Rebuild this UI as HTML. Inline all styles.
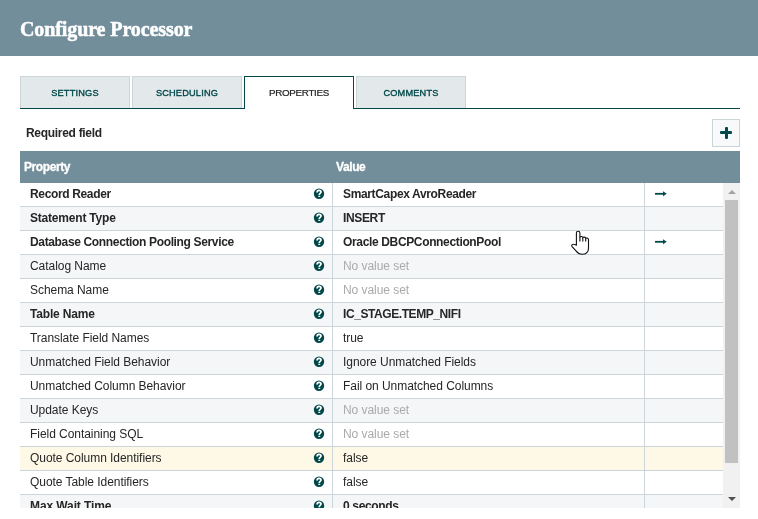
<!DOCTYPE html>
<html><head><meta charset="utf-8">
<style>
*{box-sizing:border-box}
html,body{margin:0;padding:0;width:758px;height:519px;overflow:hidden;background:#fff;font-family:"Liberation Sans",sans-serif;color:#262626}
#hdr{position:absolute;left:0;top:0;width:758px;height:56px;background:#728e9b}
#title{position:absolute;left:20px;top:18px;font:bold 20px/22px "Liberation Serif",serif;color:#fff;letter-spacing:-0.1px;white-space:nowrap;-webkit-text-stroke:0.5px #fff}
.tab{position:absolute;top:76px;height:32px;width:110px;background:#e3e8eb;border:1px solid #c9d7d6;border-bottom:none;color:#004849;font-size:9.2px;text-align:center;line-height:32px;letter-spacing:0.2px;-webkit-text-stroke:0.35px currentColor}
.tab.sel{background:#fff;border:1px solid #004849;border-bottom:none;color:#262626;height:33px;z-index:2;line-height:32px;-webkit-text-stroke:0.22px #262626;font-size:9.8px;letter-spacing:-0.3px}
#tabline{position:absolute;left:20px;top:108px;width:720px;height:1px;background:#004849}
#req{position:absolute;left:26px;top:125px;font-size:12px;font-weight:bold;line-height:16px;letter-spacing:-0.3px;color:#262626}
#add{position:absolute;left:712px;top:119px;width:28px;height:28px;border:1px solid #c9d6d5;background:#f8f9fa}
#add:before{content:"";position:absolute;left:7px;top:11px;width:12px;height:3px;background:#004849;border-radius:1px}
#add:after{content:"";position:absolute;left:11.5px;top:6.5px;width:3px;height:12px;background:#004849;border-radius:1px}
#th{position:absolute;left:20px;top:151px;width:720px;height:32px;background:#728e9b;color:#fff;font-weight:bold;font-size:12px;letter-spacing:-0.4px;-webkit-text-stroke:0.3px #fff}
#th span{position:absolute;top:9px;line-height:14px}
#grid{position:absolute;left:20px;top:183px;width:703px;height:325px;overflow:hidden}
.row{position:absolute;left:0;width:703px;height:24px;border-bottom:1px solid #ccd6da;background:#fff}
.row.odd{background:#f4f6f7}
.row.hov{background:#fef9e7}
.c{position:absolute;top:0;height:23px;line-height:23px;font-size:12px;letter-spacing:-0.05px;white-space:nowrap}
.c1{left:10px}
.c2{left:323px}
.b{font-weight:bold;letter-spacing:-0.35px}
.nv{color:#aaa}
.vline{position:absolute;top:0;width:1px;height:325px;background:#ccd6da}
.q{position:absolute;left:293px;top:5px;width:12px;height:12px}
.arr{position:absolute;left:634px;top:5px;width:14px;height:12px}
#sb{position:absolute;left:723px;top:183px;width:17px;height:325px;background:#f1f1f1}
#thumb{position:absolute;left:2px;top:17px;width:13px;height:263px;background:#c1c1c1}
#up{position:absolute;left:5px;top:7px;border-bottom:4px solid #a3a3a3;border-left:4px solid transparent;border-right:4px solid transparent}
#dn{position:absolute;left:5px;top:314px;border-top:4px solid #505050;border-left:4px solid transparent;border-right:4px solid transparent}
body{will-change:transform}
</style></head><body>
<div id="hdr"><div id="title">Configure Processor</div></div>
<div class="tab" style="left:20px">SETTINGS</div>
<div class="tab" style="left:132px">SCHEDULING</div>
<div class="tab sel" style="left:244px">PROPERTIES</div>
<div class="tab" style="left:356px">COMMENTS</div>
<div id="tabline"></div>
<div id="req">Required field</div>
<div id="add"></div>
<div id="th"><span style="left:4px">Property</span><span style="left:316px">Value</span></div>
<div id="grid">
<div class="row" style="top:0"><span class="c c1 b">Record Reader</span><svg class="q" viewBox="0 0 12 12"><circle cx="6" cy="5.7" r="5.2" fill="#004849"/><path d="M4.1 4.4C4.1 3.1 5 2.4 6.05 2.4C7.1 2.4 8 3 8 4.1C8 5.3 6.3 5.4 6.3 6.5V6.9" fill="none" stroke="#fff" stroke-width="1.7"/><rect x="5.4" y="7.7" width="1.8" height="1.3" fill="#fff"/></svg><span class="c c2 b">SmartCapex AvroReader</span><svg class="arr" viewBox="0 0 14 12"><rect x="1" y="4.9" width="9" height="1.8" fill="#004849"/><path d="M9 3.3L12.7 5.8L9 8.3Z" fill="#004849"/></svg></div>
<div class="row odd" style="top:24px"><span class="c c1 b" style="letter-spacing:-0.2px">Statement Type</span><svg class="q" viewBox="0 0 12 12"><circle cx="6" cy="5.7" r="5.2" fill="#004849"/><path d="M4.1 4.4C4.1 3.1 5 2.4 6.05 2.4C7.1 2.4 8 3 8 4.1C8 5.3 6.3 5.4 6.3 6.5V6.9" fill="none" stroke="#fff" stroke-width="1.7"/><rect x="5.4" y="7.7" width="1.8" height="1.3" fill="#fff"/></svg><span class="c c2 b">INSERT</span></div>
<div class="row" style="top:48px"><span class="c c1 b">Database Connection Pooling Service</span><svg class="q" viewBox="0 0 12 12"><circle cx="6" cy="5.7" r="5.2" fill="#004849"/><path d="M4.1 4.4C4.1 3.1 5 2.4 6.05 2.4C7.1 2.4 8 3 8 4.1C8 5.3 6.3 5.4 6.3 6.5V6.9" fill="none" stroke="#fff" stroke-width="1.7"/><rect x="5.4" y="7.7" width="1.8" height="1.3" fill="#fff"/></svg><span class="c c2 b">Oracle DBCPConnectionPool</span><svg class="arr" viewBox="0 0 14 12"><rect x="1" y="4.9" width="9" height="1.8" fill="#004849"/><path d="M9 3.3L12.7 5.8L9 8.3Z" fill="#004849"/></svg></div>
<div class="row odd" style="top:72px"><span class="c c1">Catalog Name</span><svg class="q" viewBox="0 0 12 12"><circle cx="6" cy="5.7" r="5.2" fill="#004849"/><path d="M4.1 4.4C4.1 3.1 5 2.4 6.05 2.4C7.1 2.4 8 3 8 4.1C8 5.3 6.3 5.4 6.3 6.5V6.9" fill="none" stroke="#fff" stroke-width="1.7"/><rect x="5.4" y="7.7" width="1.8" height="1.3" fill="#fff"/></svg><span class="c c2 nv">No value set</span></div>
<div class="row" style="top:96px"><span class="c c1">Schema Name</span><svg class="q" viewBox="0 0 12 12"><circle cx="6" cy="5.7" r="5.2" fill="#004849"/><path d="M4.1 4.4C4.1 3.1 5 2.4 6.05 2.4C7.1 2.4 8 3 8 4.1C8 5.3 6.3 5.4 6.3 6.5V6.9" fill="none" stroke="#fff" stroke-width="1.7"/><rect x="5.4" y="7.7" width="1.8" height="1.3" fill="#fff"/></svg><span class="c c2 nv">No value set</span></div>
<div class="row odd" style="top:120px"><span class="c c1 b" style="letter-spacing:-0.17px">Table Name</span><svg class="q" viewBox="0 0 12 12"><circle cx="6" cy="5.7" r="5.2" fill="#004849"/><path d="M4.1 4.4C4.1 3.1 5 2.4 6.05 2.4C7.1 2.4 8 3 8 4.1C8 5.3 6.3 5.4 6.3 6.5V6.9" fill="none" stroke="#fff" stroke-width="1.7"/><rect x="5.4" y="7.7" width="1.8" height="1.3" fill="#fff"/></svg><span class="c c2 b" style="letter-spacing:-0.42px">IC_STAGE.TEMP_NIFI</span></div>
<div class="row" style="top:144px"><span class="c c1">Translate Field Names</span><svg class="q" viewBox="0 0 12 12"><circle cx="6" cy="5.7" r="5.2" fill="#004849"/><path d="M4.1 4.4C4.1 3.1 5 2.4 6.05 2.4C7.1 2.4 8 3 8 4.1C8 5.3 6.3 5.4 6.3 6.5V6.9" fill="none" stroke="#fff" stroke-width="1.7"/><rect x="5.4" y="7.7" width="1.8" height="1.3" fill="#fff"/></svg><span class="c c2">true</span></div>
<div class="row odd" style="top:168px"><span class="c c1">Unmatched Field Behavior</span><svg class="q" viewBox="0 0 12 12"><circle cx="6" cy="5.7" r="5.2" fill="#004849"/><path d="M4.1 4.4C4.1 3.1 5 2.4 6.05 2.4C7.1 2.4 8 3 8 4.1C8 5.3 6.3 5.4 6.3 6.5V6.9" fill="none" stroke="#fff" stroke-width="1.7"/><rect x="5.4" y="7.7" width="1.8" height="1.3" fill="#fff"/></svg><span class="c c2">Ignore Unmatched Fields</span></div>
<div class="row" style="top:192px"><span class="c c1">Unmatched Column Behavior</span><svg class="q" viewBox="0 0 12 12"><circle cx="6" cy="5.7" r="5.2" fill="#004849"/><path d="M4.1 4.4C4.1 3.1 5 2.4 6.05 2.4C7.1 2.4 8 3 8 4.1C8 5.3 6.3 5.4 6.3 6.5V6.9" fill="none" stroke="#fff" stroke-width="1.7"/><rect x="5.4" y="7.7" width="1.8" height="1.3" fill="#fff"/></svg><span class="c c2">Fail on Unmatched Columns</span></div>
<div class="row odd" style="top:216px"><span class="c c1">Update Keys</span><svg class="q" viewBox="0 0 12 12"><circle cx="6" cy="5.7" r="5.2" fill="#004849"/><path d="M4.1 4.4C4.1 3.1 5 2.4 6.05 2.4C7.1 2.4 8 3 8 4.1C8 5.3 6.3 5.4 6.3 6.5V6.9" fill="none" stroke="#fff" stroke-width="1.7"/><rect x="5.4" y="7.7" width="1.8" height="1.3" fill="#fff"/></svg><span class="c c2 nv">No value set</span></div>
<div class="row" style="top:240px"><span class="c c1">Field Containing SQL</span><svg class="q" viewBox="0 0 12 12"><circle cx="6" cy="5.7" r="5.2" fill="#004849"/><path d="M4.1 4.4C4.1 3.1 5 2.4 6.05 2.4C7.1 2.4 8 3 8 4.1C8 5.3 6.3 5.4 6.3 6.5V6.9" fill="none" stroke="#fff" stroke-width="1.7"/><rect x="5.4" y="7.7" width="1.8" height="1.3" fill="#fff"/></svg><span class="c c2 nv">No value set</span></div>
<div class="row hov" style="top:264px"><span class="c c1">Quote Column Identifiers</span><svg class="q" viewBox="0 0 12 12"><circle cx="6" cy="5.7" r="5.2" fill="#004849"/><path d="M4.1 4.4C4.1 3.1 5 2.4 6.05 2.4C7.1 2.4 8 3 8 4.1C8 5.3 6.3 5.4 6.3 6.5V6.9" fill="none" stroke="#fff" stroke-width="1.7"/><rect x="5.4" y="7.7" width="1.8" height="1.3" fill="#fff"/></svg><span class="c c2">false</span></div>
<div class="row" style="top:288px"><span class="c c1">Quote Table Identifiers</span><svg class="q" viewBox="0 0 12 12"><circle cx="6" cy="5.7" r="5.2" fill="#004849"/><path d="M4.1 4.4C4.1 3.1 5 2.4 6.05 2.4C7.1 2.4 8 3 8 4.1C8 5.3 6.3 5.4 6.3 6.5V6.9" fill="none" stroke="#fff" stroke-width="1.7"/><rect x="5.4" y="7.7" width="1.8" height="1.3" fill="#fff"/></svg><span class="c c2">false</span></div>
<div class="row odd" style="top:312px"><span class="c c1 b" style="letter-spacing:-0.1px">Max Wait Time</span><svg class="q" viewBox="0 0 12 12"><circle cx="6" cy="5.7" r="5.2" fill="#004849"/><path d="M4.1 4.4C4.1 3.1 5 2.4 6.05 2.4C7.1 2.4 8 3 8 4.1C8 5.3 6.3 5.4 6.3 6.5V6.9" fill="none" stroke="#fff" stroke-width="1.7"/><rect x="5.4" y="7.7" width="1.8" height="1.3" fill="#fff"/></svg><span class="c c2 b">0 seconds</span></div>
<div class="vline" style="left:312px"></div>
<div class="vline" style="left:624px"></div>
</div>
<div id="sb"><div id="up"></div><div id="thumb"></div><div id="dn"></div></div>
<svg id="cur" style="position:absolute;left:566px;top:226px;width:30px;height:30px;z-index:5" viewBox="0 0 30 30"><path d="M10.4 19.2L10.4 6.9Q10.4 5.2 12.15 5.2Q13.9 5.2 13.9 6.9L13.9 10.9Q14.2 10.4 15.4 10.5Q16.8 10.6 16.8 11.6Q17.1 11 18.3 11.1Q19.7 11.2 19.7 12.2Q20 12 21.1 12.1Q22.5 12.3 22.5 13.6L22.5 22Q22.5 28.3 15.8 28.3Q12.6 28.3 10.2 25.2L6.1 20.6Q5.2 19.4 6.3 18.6Q7.6 17.8 8.8 18.6Z" fill="#fff" stroke="#111" stroke-width="1.1" stroke-linejoin="round"/><path d="M13.9 10.9V15.6M16.8 11.6V15.6M19.7 12.2V15.6" stroke="#111" stroke-width="1.1" fill="none"/></svg>
</body></html>
